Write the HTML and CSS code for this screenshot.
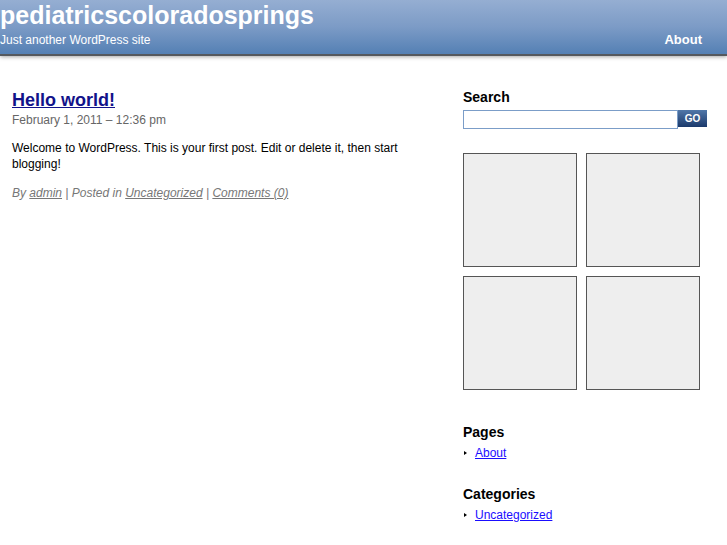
FILE: index.html
```html
<!DOCTYPE html>
<html>
<head>
<meta charset="utf-8">
<link rel="stylesheet" href="styles.css">
</head>
<body>
<header class="masthead">
  <div class="brand">
    <h1 class="site-title">pediatricscoloradosprings</h1>
    <div class="tagline">Just another WordPress site</div>
  </div>
  <nav class="nav"><a href="#">About</a></nav>
</header>
<div class="page">
  <main class="content">
    <h2 class="post-title"><a href="#">Hello world!</a></h2>
    <div class="date">February 1, 2011 – 12:36 pm</div>
    <p class="entry">Welcome to WordPress. This is your first post. Edit or delete it, then start blogging!</p>
    <p class="meta">By <a href="#">admin</a> | Posted in <a href="#">Uncategorized</a> | <a href="#">Comments (0)</a></p>
  </main>
  <aside class="sidebar">
    <h3 class="widget-title">Search</h3>
    <form class="search">
      <input class="search-input" type="text">
      <button class="go" type="button">GO</button>
    </form>
    <div class="ads">
      <div class="ad"></div>
      <div class="ad"></div>
      <div class="ad"></div>
      <div class="ad"></div>
    </div>
    <h3 class="widget-title pages-title">Pages</h3>
    <ul class="list"><li><a href="#">About</a></li></ul>
    <h3 class="widget-title cat-title">Categories</h3>
    <ul class="list"><li><a href="#">Uncategorized</a></li></ul>
  </aside>
</div>
</body>
</html>
```
FILE: styles.css
```css
html, body { margin: 0; padding: 0; background: #fff; }
body { font-family: "Liberation Sans", Arial, sans-serif; color: #000; }

.masthead {
  height: 54px;
  background: linear-gradient(#95aed2, #7c9bc6 50%, #5480b4);
  border-bottom: 2px solid #55595e;
  box-shadow: 0 1px 4px rgba(0,0,0,0.35);
  display: flex;
  justify-content: space-between;
  align-items: flex-end;
  color: #fff;
}
.brand { align-self: flex-start; }
.site-title {
  margin: 0;
  padding-top: 1px;
  font-size: 25px;
  line-height: 28px;
  font-weight: bold;
  color: #fff;
}
.tagline { font-size: 12px; line-height: 14px; margin-top: 4px; }
.nav { padding: 0 25px 6px 0; }
.nav a { color: #fff; text-decoration: none; font-weight: bold; font-size: 13px; }

.page { display: flex; padding-top: 32px; }
.content { width: 410px; padding-left: 12px; }
.post-title { margin: 0; font-size: 18px; line-height: 24px; }
.post-title a { color: #12128a; }
.date { font-size: 12px; color: #666; margin-top: 1px; }
.entry { font-size: 12px; line-height: 16px; margin: 13px 0 0; }
.meta { font-size: 12px; color: #777; font-style: italic; margin: 14px 0 0; }
.meta a { color: #777; }

.sidebar { margin-left: 41px; width: 250px; }
.widget-title { margin: 0; font-size: 14px; line-height: 18px; font-weight: bold; }
.search { display: flex; margin-top: 4px; }
.search-input {
  width: 215px; height: 19px; box-sizing: border-box;
  border: 1px solid #7b9dc8; margin: 0; padding: 0;
}
.go {
  width: 29px; height: 17px; border: 0; margin: 0; padding: 0;
  background: linear-gradient(#5177a8, #1b3a6c);
  color: #fff; font-weight: bold; font-size: 10px;
  font-family: "Liberation Sans", Arial, sans-serif;
}
.ads {
  display: grid;
  grid-template-columns: 114px 114px;
  grid-auto-rows: 114px;
  gap: 9px;
  margin-top: 24px;
}
.ad { border: 1px solid #555; background: #eee; box-sizing: border-box; }
.pages-title { margin-top: 33px; }
.cat-title { margin-top: 25px; }
.list { margin: 5px 0 0; padding: 0 0 0 12px; font-size: 12px; line-height: 14px; list-style: none; }
.list li { position: relative; }
.list li::before {
  content: ""; position: absolute; left: -11px; top: 5px;
  width: 0; height: 0; border-left: 3px solid #000;
  border-top: 2px solid transparent; border-bottom: 2px solid transparent;
}
.list a { color: #1a0dff; }
```
